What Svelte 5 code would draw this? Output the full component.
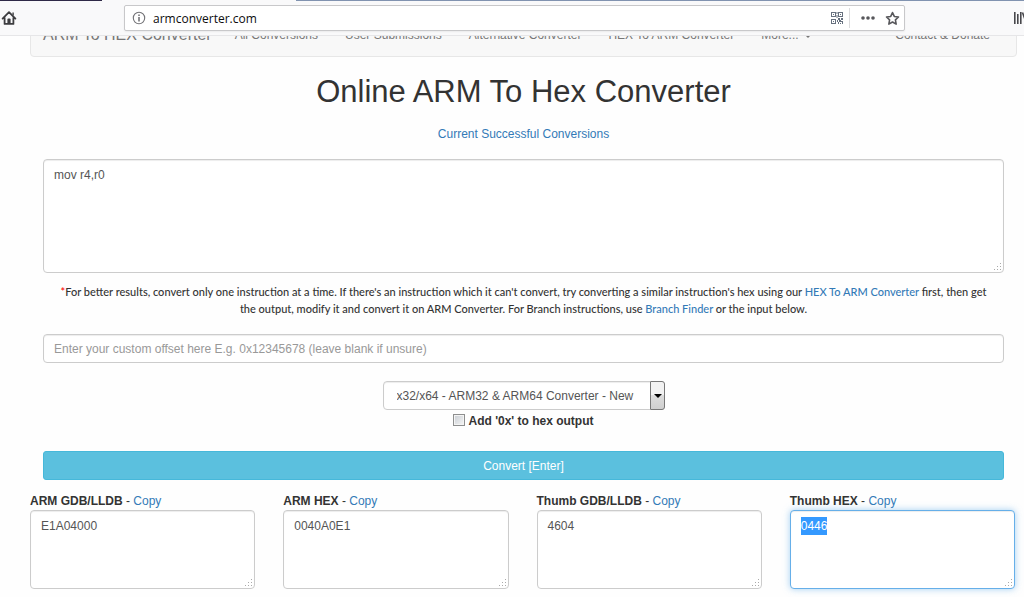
<script>
  import { onMount } from 'svelte';

  const links = ['All Conversions', 'User Submissions', 'Alternative Converter', 'HEX To ARM Converter'];
  const outputs = $state([
    { id: 'arm-gdb', label: 'ARM GDB/LLDB', value: 'E1A04000' },
    { id: 'arm-hex', label: 'ARM HEX', value: '0040A0E1' },
    { id: 'thumb-gdb', label: 'Thumb GDB/LLDB', value: '4604' },
    { id: 'thumb-hex', label: 'Thumb HEX', value: '0446' }
  ]);
  let code = $state('mov r4,r0');
  let offset = $state('');
  let prefix = $state(false);

  function copy(id) {
    const box = document.getElementById(id);
    box.focus({ preventScroll: true });
    box.select();
  }

  onMount(() => copy('thumb-hex'));
</script>

{#snippet grip()}
  <svg class="grip" viewBox="0 0 8 8" aria-hidden="true">
    <path d="M6 0h1v1h-1zM6 3h1v1h-1zM3 3h1v1h-1zM6 6h1v1h-1zM3 6h1v1h-1zM0 6h1v1h-1z" />
  </svg>
{/snippet}

<header class="browser">
  <div class="tabs"><span class="tab-dark"></span><span class="tab-active"></span><span class="tab-rest"></span></div>
  <div class="toolbar">
    <button class="icon home" aria-label="Home">
      <svg width="16" height="16" viewBox="0 0 16 16">
        <path d="M1.6 8.6 8 2.2l6.400 6.400M3.600 8v5.900h8.800V8" fill="none" stroke="#3d3d40" stroke-width="1.800" stroke-linecap="round" stroke-linejoin="round" />
        <path d="M6.400 14V9.600q0-1 1-1h1.200q1 0 1 1V14z" fill="#3d3d40" />
        <path d="M11.400 2.600h1.400v3.200l-1.400-1.400z" fill="#3d3d40" />
      </svg>
    </button>
    <div class="url">
      <svg width="14" height="14" viewBox="0 0 14 14" aria-hidden="true">
        <circle cx="7" cy="7" r="5.700" fill="none" stroke="#737377" stroke-width="1.100" />
        <path d="M6.300 3.500h1.400v1.500H6.300zM6.300 6h1.400v4.400H6.300z" fill="#626266" />
      </svg>
      <input aria-label="Address" value="armconverter.com" />
      <button class="icon" aria-label="QR code">
        <svg width="14" height="14" viewBox="0 0 14 14" fill="#66707e">
          <path fill-rule="evenodd" d="M1 1h5v5H1zM2 2v3h3V2zM8 1h5v5H8zM9 2v3h3V2zM1 8h5v5H1zM2 9v3h3V9z" />
          <path d="M3 3h1v1H3zM10 3h1v1h-1zM3 10h1v1H3zM6.500 1h1v2h-1zM6.500 4h1v3h-1zM8 7h2v2H8zM11 7h2v2h-2zM7 9h1v2H7zM9 9h2v2H9zM11 10h2v1h-2zM8 11h1v2H8zM10 12h1v1h-1zM12 11h1v2h-1z" />
        </svg>
      </button>
      <span class="rule"></span>
      <button class="icon dots" aria-label="Page actions">
        <svg width="14" height="14" viewBox="0 0 14 14" fill="#57575b"><circle cx="2" cy="7" r="1.800" /><circle cx="7" cy="7" r="1.800" /><circle cx="12" cy="7" r="1.800" /></svg>
      </button>
      <button class="icon" aria-label="Bookmark">
        <svg width="15" height="15" viewBox="0 0 16 16"><path d="m8 1.700 1.900 4.100 4.500.6-3.300 3.100.8 4.500L8 11.800 4.100 14l.8-4.500L1.600 6.400l4.500-.6z" fill="none" stroke="#57575b" stroke-width="1.700" stroke-linejoin="round" /></svg>
      </button>
    </div>
    <button class="icon library" aria-label="Library">
      <svg width="11" height="14" viewBox="0 0 11 14" fill="none" stroke="#48484c" stroke-width="1.600"><path d="M1.800 1v12M4.800 3v10M7.800 1v12M9.500 1.500l4 11" /></svg>
    </button>
  </div>
</header>

<div class="page">
  <nav>
    <a class="brand" href="#home">ARM To HEX Converter</a>
    {#each links as link}
      <a href="#{link}">{link}</a>
    {/each}
    <a href="#more">More... <span class="caret"></span></a>
    <a class="contact" href="#contact">Contact &amp; Donate</a>
  </nav>

  <main>
    <h1>Online ARM To Hex Converter</h1>
    <a class="recent" href="#conversions">Current Successful Conversions</a>
    <div class="area code">
      <textarea class="field" aria-label="ARM code" spellcheck="false" bind:value={code}></textarea>
      {@render grip()}
    </div>
    <p class="hint"><span class="star">*</span>For better results, convert only one instruction at a time. If there's an instruction which it can't convert, try converting a similar instruction's hex using our <a href="#hex">HEX To ARM Converter</a> first, then get the output, modify it and convert it on ARM Converter. For Branch instructions, use <a href="#branch">Branch Finder</a> or the input below.</p>
    <input class="field offset" aria-label="Custom offset" placeholder="Enter your custom offset here E.g. 0x12345678 (leave blank if unsure)" bind:value={offset} />
    <div class="select">
      <select class="field" aria-label="Converter">
        <option>x32/x64 - ARM32 &amp; ARM64 Converter - New</option>
      </select>
      <span class="arrow"></span>
    </div>
    <label class="check"><input type="checkbox" bind:checked={prefix} />Add '0x' to hex output</label>
    <button class="convert">Convert [Enter]</button>
  </main>

  <section class="outputs">
    {#each outputs as out}
      <div>
        <div class="caption"><label for={out.id}>{out.label}</label> - <a href="#{out.id}" onclick={(e) => { e.preventDefault(); copy(out.id); }}>Copy</a></div>
        <div class="area">
          <textarea class="field" id={out.id} spellcheck="false" bind:value={out.value}></textarea>
          {@render grip()}
        </div>
      </div>
    {/each}
  </section>
</div>

<style>
  :global(body) {
    margin: 0;
    background: #fefefe;
    color: #333;
    font: 12px/18px 'Liberation Sans', Arial, sans-serif;
    overflow: hidden;
  }
  :global(*) { box-sizing: border-box; }
  a { color: #337ab7; text-decoration: none; }
  button, input, select, textarea { font: inherit; margin: 0; }

  .browser {
    position: relative;
    z-index: 1;
    height: 36px;
    background: #f9f9fa;
    border-bottom: 1px solid #e6e6e8;
  }
  .tabs { display: flex; height: 1px; }
  .tab-dark { flex: 102; background: #2e2947; }
  .tab-active { flex: 194; background: #f9f9fa; }
  .tab-rest { flex: 728; background: #8193b0; }
  .toolbar { display: flex; align-items: center; padding-top: 4px; }
  .icon {
    display: flex;
    flex: none;
    padding: 0;
    border: 0;
    background: none;
  }
  .home { width: 124px; padding-left: 1px; }
  .url {
    flex: 1;
    display: flex;
    align-items: center;
    height: 26px;
    padding: 0 5px 0 7px;
    border: 1px solid #c8c8ca;
    border-radius: 2px;
    background: #fff;
    box-shadow: 0 1px 2px rgba(0, 0, 0, 0.06);
  }
  .url input {
    flex: 1;
    min-width: 0;
    padding: 2px 0 0 7px;
    border: 0;
    outline: 0;
    background: none;
    color: #0c0c0d;
    font: 12px/18px 'Open Sans', 'Noto Sans', sans-serif;
  }
  .rule { width: 1px; height: 20px; margin: 0 11px 0 5px; background: #dcdcde; }
  .dots { margin-right: 10px; }
  .url .icon:last-child { margin-right: -1px; }
  .library { margin-left: 108px; }

  .page { padding: 0 7px 8px 30px; }
  nav {
    display: flex;
    align-items: center;
    gap: 27px;
    height: 44px;
    margin-top: -23px;
    padding: 0 26px 0 12px;
    border: 1px solid #e7e7e7;
    border-radius: 4px;
    background: #f8f8f8;
    white-space: nowrap;
  }
  nav a { color: #777; }
  .brand { margin-right: -4px; font-size: 16px; }
  .contact { margin-left: auto; }
  .caret {
    display: inline-block;
    margin-left: 2px;
    border: 4px solid transparent;
    border-top-color: #777;
    border-bottom: 0;
    vertical-align: middle;
  }

  main {
    display: flex;
    flex-direction: column;
    align-items: center;
    padding: 0 13px;
  }
  h1 { margin: 17px 0 15px; font-size: 31px; line-height: 36px; font-weight: 400; }
  .recent { margin-bottom: 16px; }
  .field {
    display: block;
    width: 100%;
    padding: 5px 10px;
    border: 1px solid #ccc;
    border-radius: 4px;
    outline: 0;
    background: #fff;
    color: #555;
    box-shadow: inset 0 1px 1px rgba(0, 0, 0, 0.075);
  }
  .area { position: relative; width: 100%; }
  .area textarea { height: 79px; padding-top: 6px; resize: none; }
  .code textarea { height: 114px; }
  .grip { position: absolute; right: 2px; bottom: 2px; width: 8px; height: 8px; fill: #aaa; }
  textarea:focus {
    border-color: #66afe9;
    box-shadow: inset 0 1px 1px rgba(0, 0, 0, 0.075), 0 0 7px rgba(102, 175, 233, 0.6);
  }
  textarea::selection { background: rgba(51, 153, 255, 0.996); color: #fff; }
  .hint {
    margin: 10px 0 17px;
    padding: 0 12px;
    text-align: center;
    font: 500 11px/17px Lato, 'Open Sans', sans-serif;
  }
  .star { color: #f00; }
  .offset { height: 29px; }
  .offset::placeholder { color: #999; }
  .select { position: relative; width: 282px; margin-top: 18px; }
  .select select { height: 29px; padding: 0 13px; appearance: none; }
  .arrow {
    position: absolute;
    top: 0;
    right: 0;
    width: 15px;
    height: 29px;
    border: 1px solid #777;
    border-radius: 1px 3px 3px 1px;
    background: linear-gradient(#f2f2f2 50%, #dcdcdc 50%, #cfcfcf);
    pointer-events: none;
  }
  .arrow::after {
    content: '';
    position: absolute;
    top: 12px;
    left: 3px;
    border: 4px solid transparent;
    border-top-color: #000;
    border-bottom: 0;
  }
  .check { display: flex; align-items: center; gap: 3px; margin-top: 2px; font-weight: 700; }
  .check input {
    width: 12px;
    height: 12px;
    margin-bottom: 3px;
    appearance: none;
    border: 1px solid #8e8f8f;
    background: linear-gradient(135deg, #c8cdd3, #f6f6f6);
    box-shadow: inset 0 0 0 1px #f4f4f4;
  }
  .check input:checked { background: #337ab7; }
  .convert {
    width: 100%;
    height: 29px;
    margin-top: 21px;
    padding: 0;
    border: 1px solid #46b8da;
    border-radius: 3px;
    background: #5bc0de;
    color: #fff;
  }
  .outputs {
    display: grid;
    grid-template-columns: repeat(4, 1fr);
    gap: 28px;
    margin: 13px 2px 0 0;
  }
  .caption { line-height: 17px; }
  .caption label { font-weight: 700; }
</style>
